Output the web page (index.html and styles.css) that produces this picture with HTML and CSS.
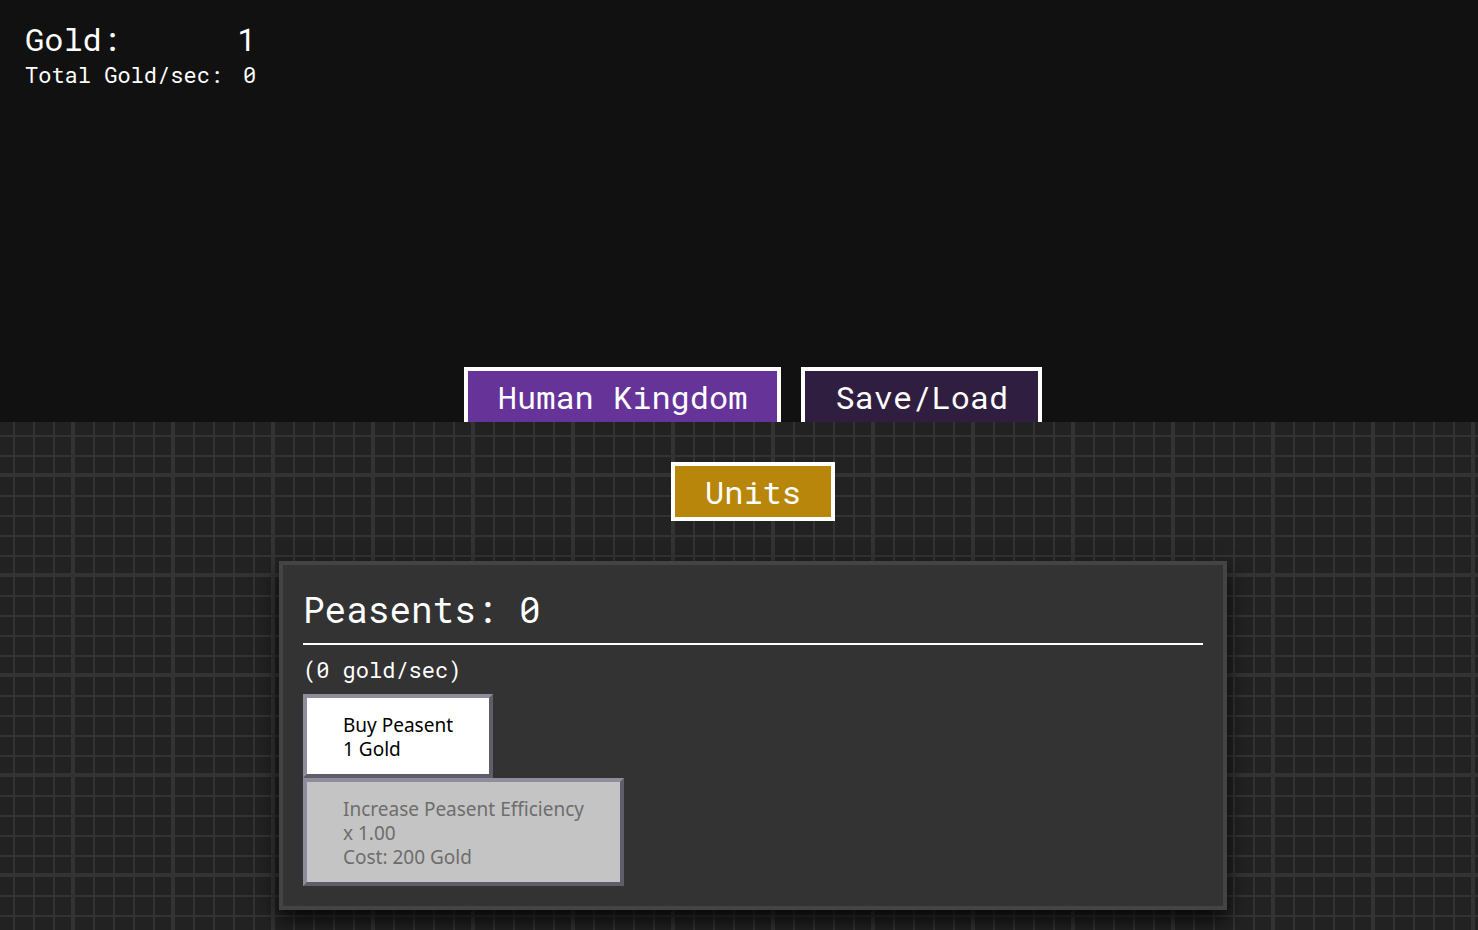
FILE: index.html
```html
<!DOCTYPE html>
<html lang="en">
<head>
   <meta charset="utf-8">
   <meta name="viewport" content="width=device-width, initial-scale=1">
   <title>Human Kingdom</title>
   <link rel="stylesheet" href="styles.css">
</head>
<body>
   <header class="top">
      <div class="stats">
         <div class="stat gold"><span>Gold:</span><span id="gold">1</span></div>
         <div class="stat gps"><span>Total Gold/sec:</span><span id="gps">0</span></div>
      </div>
      <nav class="tabs">
         <button type="button" class="tab active">Human Kingdom</button>
         <button type="button" class="tab">Save/Load</button>
      </nav>
   </header>

   <main class="content">
      <button type="button" class="tab units">Units</button>

      <section class="panel">
         <h1 class="title">Peasents: <span id="peasents">0</span></h1>
         <p class="rate">(<span id="peasent_rate">0</span> gold/sec)</p>
         <button type="button" class="buy">Buy Peasent<br>1 Gold</button>
         <button type="button" class="buy" disabled>Increase Peasent Efficiency<br>x 1.00<br>Cost: 200 Gold</button>
      </section>
   </main>
</body>
</html>
```
FILE: styles.css
```css
* {
   box-sizing: border-box;
}

body {
   margin: 0;
   min-height: 100vh;
   color: white;
   font-family: "Roboto Mono", "Liberation Mono", monospace;
   font-size: 22px;
   background-color: #222;
   background-image:
      linear-gradient(#333 4px, transparent 4px),
      linear-gradient(90deg, #333 4px, transparent 4px),
      linear-gradient(#333 2px, transparent 2px),
      linear-gradient(90deg, #333 2px, transparent 2px);
   background-size: 100px 100px, 100px 100px, 20px 20px, 20px 20px;
   background-position: 71px 73px, 71px 73px, 13px 15px, 13px 15px;
}

/* top bar */
.top {
   display: flex;
   flex-direction: column;
   justify-content: space-between;
   height: 422px;
   padding-top: 20px;
   background-color: #111;
}

.stats {
   align-self: flex-start;
   padding-left: 25px;
}

.stat {
   display: flex;
   justify-content: space-between;
   gap: 20px;
}

.gold {
   font-size: 32px;
   line-height: 38px;
}

.gps {
   line-height: 34px;
}

.tabs {
   display: flex;
   justify-content: center;
   gap: 20px;
   padding-left: 28px;
}

.tab {
   padding: 0 30px;
   border: 4px solid white;
   color: white;
   background-color: #301e41;
   font-family: inherit;
   font-size: 32px;
   line-height: 51px;
   cursor: pointer;
}

.tabs .tab {
   border-bottom: none;
}

.active {
   background-color: rebeccapurple;
}

.units {
   background-color: darkgoldenrod;
}

/* unit list */
.content {
   display: flex;
   flex-direction: column;
   align-items: center;
   gap: 40px;
   padding: 40px 0 20px 28px;
}

.panel {
   display: flex;
   flex-direction: column;
   align-items: flex-start;
   width: 100%;
   max-width: 948px;
   padding: 20px;
   border: 4px solid #444;
   background-color: #333;
   box-shadow: 0 10px 20px rgba(0, 0, 0, 0.8);
}

.title {
   width: 100%;
   margin: 0;
   padding-bottom: 10px;
   border-bottom: 2px solid white;
   font-size: 36px;
   font-weight: normal;
   line-height: 48px;
}

.rate {
   margin: 0;
   padding: 10px 0;
   line-height: 29px;
}

.buy {
   padding: 15px 36px 13px;
   border: 4px solid;
   border-color: #8f8d9c #5f5d67 #5f5d67 #8f8d9c;
   color: black;
   background-color: white;
   font-family: Tahoma, "Noto Sans", sans-serif;
   font-size: 19px;
   line-height: 24px;
   text-align: left;
   cursor: pointer;
}

.buy:disabled {
   color: #6d6d6d;
   background-color: #c4c4c4;
   cursor: default;
}
```
